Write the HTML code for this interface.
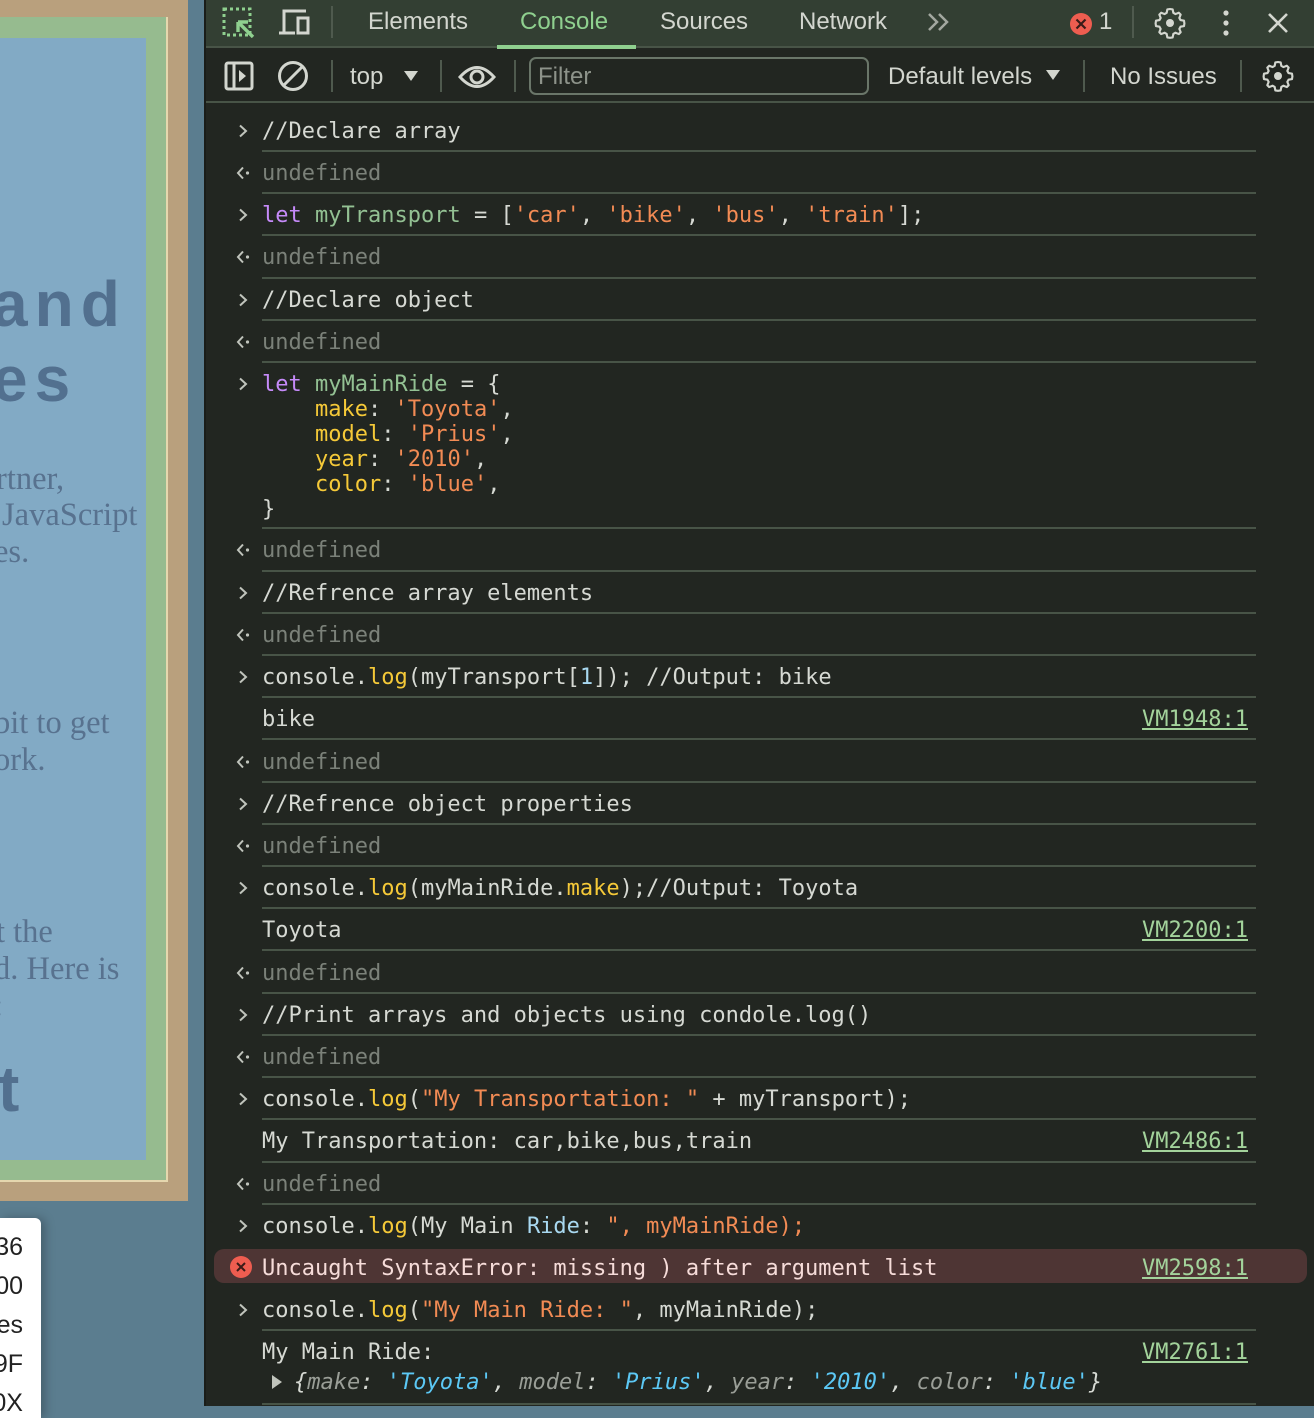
<!DOCTYPE html>
<html><head><meta charset="utf-8">
<style>
*{margin:0;padding:0;box-sizing:border-box}
body{width:1314px;height:1406px;overflow:hidden;background:#5b7d8f;position:relative;font-family:"Liberation Sans",sans-serif}
.abs{position:absolute}
.big{position:absolute;font-family:"Liberation Sans",sans-serif;font-weight:bold;color:#52708f;font-size:64px;letter-spacing:7px;white-space:pre}
.ser{position:absolute;font-family:"Liberation Serif",serif;color:#58728f;font-size:32.5px;white-space:pre;line-height:37px}
#dt{position:absolute;left:204px;top:0;width:1110px;height:1406px;background:#222621;border-left:2px solid #1a1d19}
.t{position:absolute;left:262px;white-space:pre;font-family:"DejaVu Sans Mono","Liberation Mono",monospace;font-size:22px;line-height:25px;color:#d6d9d3;margin-top:1px}
.l{position:absolute;left:262px;width:994px;height:2px;background:#485447}
.p{position:absolute;left:236px;width:14px;height:14px}
.u{color:#7b8179}
.k{color:#c58af9}
.v{color:#93c193}
.s{color:#f28b54}
.y{color:#f5c938}
.n{color:#a8d8f0}
.lnk{position:absolute;right:66px;font-family:"DejaVu Sans Mono",monospace;font-size:22px;line-height:25px;color:#a3d39b;text-decoration:underline;margin-top:1px}
.tab{position:absolute;top:8px;font-size:24px;color:#d3d6cf}
.sep{position:absolute;width:2px;background:#4f5a4e}
</style></head><body>
<div class="abs" style="left:0;top:0;width:188px;height:1201px;background:#b9a07d"></div>
<div class="abs" style="left:0;top:17px;width:168px;height:1165px;background:#e5d7ae"></div>
<div class="abs" style="left:0;top:17px;width:166px;height:1163px;background:#96bb8f"></div>
<div class="abs" style="left:0;top:38px;width:146px;height:1122px;background:#82aac5"></div>
<div class="abs" style="left:0;top:0;width:146px;height:1160px;overflow:hidden">
<div class="big" style="left:-8px;top:267px">and</div>
<div class="big" style="left:-8px;top:342px">es</div>
<div class="ser" style="left:-4px;top:461px">rtner,</div>
<div class="ser" style="left:2px;top:497px">JavaScript</div>
<div class="ser" style="left:-6px;top:534px">es.</div>
<div class="ser" style="left:-6px;top:705px">bit to get</div>
<div class="ser" style="left:-6px;top:742px">ork.</div>
<div class="ser" style="left:-4px;top:914px">t the</div>
<div class="ser" style="left:-6px;top:951px">d. Here is</div>
<div class="ser" style="left:-6px;top:988px">:</div>
<div class="big" style="left:-2px;top:1052px">t</div>
</div>
<div class="abs" style="left:0;top:1218px;width:41px;height:200px;background:#fff;border-radius:0 6px 0 0;box-shadow:4px 0 10px rgba(0,0,0,.25);overflow:hidden">
<div style="position:absolute;right:18px;top:10px;font-size:25px;line-height:39px;color:#222;white-space:pre;text-align:right">36
00
es
9F
0X</div>
</div>

<div id="dt">
<div class="abs" style="left:0;top:0;width:1110px;height:48px;background:#333f33;border-bottom:2px solid #485447"></div>
</div>
<svg class="abs" style="left:222px;top:6px" width="36" height="32" viewBox="0 0 36 32"><rect x="2" y="3" width="26" height="26" fill="none" stroke="#8fd08f" stroke-width="3" stroke-dasharray="3 3"/><path d="M16 16 L31 31 M16 16 L16 26 M16 16 L26 16" stroke="#8fd08f" stroke-width="3.4" fill="none"/></svg>
<svg class="abs" style="left:278px;top:8px" width="34" height="28" viewBox="0 0 34 28"><path d="M6 24 V3 H28 M1 25 H17" stroke="#d3d6cf" stroke-width="3" fill="none"/><rect x="20" y="10" width="10" height="15" fill="none" stroke="#d3d6cf" stroke-width="3"/></svg>
<div class="sep" style="left:331px;top:6px;height:32px"></div>
<div class="tab" style="left:368px">Elements</div>
<div class="tab" style="left:520px;color:#8fd08f">Console</div>
<div class="abs" style="left:497px;top:45px;width:139px;height:4px;background:#8fd08f"></div>
<div class="tab" style="left:660px">Sources</div>
<div class="tab" style="left:799px">Network</div>
<svg class="abs" style="left:926px;top:12px" width="26" height="20" viewBox="0 0 26 20"><path d="M3 2 L11 10 L3 18 M13 2 L21 10 L13 18" stroke="#a3a8a0" stroke-width="2.5" fill="none"/></svg>
<svg class="abs" style="left:1069px;top:12px" width="24" height="24" viewBox="0 0 24 24"><circle cx="12" cy="12" r="11" fill="#ee5d50"/><path d="M7.5 7.5 L16.5 16.5 M16.5 7.5 L7.5 16.5" stroke="#3a1b18" stroke-width="2.2"/></svg>
<div class="tab" style="left:1099px">1</div>
<div class="sep" style="left:1132px;top:6px;height:32px"></div>
<svg class="abs" style="left:1154px;top:7px" width="32" height="32" viewBox="0 0 24 24"><path d="M12 1.5l2 .3.5 2.6 1.6.9 2.5-1 1.4 1.4-1 2.5.9 1.6 2.6.5.3 2-.3 2-2.6.5-.9 1.6 1 2.5-1.4 1.4-2.5-1-1.6.9-.5 2.6-2 .3-2-.3-.5-2.6-1.6-.9-2.5 1-1.4-1.4 1-2.5-.9-1.6-2.6-.5-.3-2 .3-2 2.6-.5.9-1.6-1-2.5 1.4-1.4 2.5 1 1.6-.9.5-2.6z" fill="none" stroke="#d3d6cf" stroke-width="1.6" stroke-linejoin="round"/><circle cx="12" cy="12" r="3" fill="#d3d6cf"/></svg>
<svg class="abs" style="left:1218px;top:8px" width="16" height="30"><circle cx="8" cy="5" r="2.6" fill="#d3d6cf"/><circle cx="8" cy="15" r="2.6" fill="#d3d6cf"/><circle cx="8" cy="25" r="2.6" fill="#d3d6cf"/></svg>
<svg class="abs" style="left:1266px;top:11px" width="24" height="24"><path d="M3 3 L21 21 M21 3 L3 21" stroke="#d3d6cf" stroke-width="2.6"/></svg>
<div class="abs" style="left:206px;top:101px;width:1108px;height:2px;background:#485447"></div>
<svg class="abs" style="left:224px;top:61px" width="30" height="30" viewBox="0 0 30 30"><rect x="2" y="2" width="26" height="26" rx="2" fill="none" stroke="#d3d6cf" stroke-width="3"/><path d="M10 2 V28" stroke="#d3d6cf" stroke-width="3"/><path d="M15 9 L22 15 L15 21Z" fill="#d3d6cf"/></svg>
<svg class="abs" style="left:277px;top:60px" width="32" height="32" viewBox="0 0 32 32"><circle cx="16" cy="16" r="13.5" fill="none" stroke="#d3d6cf" stroke-width="3"/><path d="M7 25 L25 7" stroke="#d3d6cf" stroke-width="3"/></svg>
<div class="sep" style="left:331px;top:60px;height:32px"></div>
<div class="tab" style="left:350px;top:63px">top</div>
<svg class="abs" style="left:403px;top:70px" width="16" height="12"><path d="M1 1 H15 L8 11Z" fill="#d3d6cf"/></svg>
<div class="sep" style="left:440px;top:60px;height:32px"></div>
<svg class="abs" style="left:458px;top:64px" width="38" height="26" viewBox="0 0 38 26"><path d="M2 13 Q19 -6 36 13 Q19 32 2 13Z" fill="none" stroke="#d3d6cf" stroke-width="3"/><circle cx="19" cy="13" r="6" fill="none" stroke="#d3d6cf" stroke-width="3"/></svg>
<div class="sep" style="left:514px;top:60px;height:32px"></div>
<div class="abs" style="left:529px;top:57px;width:340px;height:38px;border:2px solid #6a7669;border-radius:7px"></div>
<div class="tab" style="left:538px;top:63px;color:#8d938a">Filter</div>
<div class="tab" style="left:888px;top:63px">Default levels</div>
<svg class="abs" style="left:1045px;top:69px" width="16" height="12"><path d="M1 1 H15 L8 11Z" fill="#d3d6cf"/></svg>
<div class="sep" style="left:1083px;top:60px;height:32px"></div>
<div class="tab" style="left:1110px;top:63px">No Issues</div>
<div class="sep" style="left:1240px;top:60px;height:32px"></div>
<svg class="abs" style="left:1262px;top:60px" width="32" height="32" viewBox="0 0 24 24"><path d="M12 1.5l2 .3.5 2.6 1.6.9 2.5-1 1.4 1.4-1 2.5.9 1.6 2.6.5.3 2-.3 2-2.6.5-.9 1.6 1 2.5-1.4 1.4-2.5-1-1.6.9-.5 2.6-2 .3-2-.3-.5-2.6-1.6-.9-2.5 1-1.4-1.4 1-2.5-.9-1.6-2.6-.5-.3-2 .3-2 2.6-.5.9-1.6-1-2.5 1.4-1.4 2.5 1 1.6-.9.5-2.6z" fill="none" stroke="#d3d6cf" stroke-width="1.6" stroke-linejoin="round"/><circle cx="12" cy="12" r="3" fill="#d3d6cf"/></svg>

<svg width="0" height="0" style="position:absolute"><defs>
<symbol id="gt" viewBox="0 0 14 14"><path d="M4 1.5 L10 7 L4 12.5" stroke="#c0c4bc" stroke-width="2" fill="none"/></symbol>
<symbol id="lt" viewBox="0 0 14 14"><path d="M7 1.5 L2 7 L7 12.5" stroke="#c0c4bc" stroke-width="2" fill="none"/><circle cx="11.5" cy="7" r="1.6" fill="#c0c4bc"/></symbol>
</defs></svg>

<svg class="p" style="top:124px"><use href="#gt"/></svg><div class="t" style="top:118px">//Declare array</div><div class="l" style="top:150px"></div>
<svg class="p" style="top:166px"><use href="#lt"/></svg><div class="t u" style="top:160px">undefined</div><div class="l" style="top:192px"></div>
<svg class="p" style="top:208px"><use href="#gt"/></svg><div class="t" style="top:202px"><span class="k">let</span> <span class="v">myTransport</span> = [<span class="s">'car'</span>, <span class="s">'bike'</span>, <span class="s">'bus'</span>, <span class="s">'train'</span>];</div><div class="l" style="top:234px"></div>
<svg class="p" style="top:250px"><use href="#lt"/></svg><div class="t u" style="top:244px">undefined</div><div class="l" style="top:277px"></div>
<svg class="p" style="top:293px"><use href="#gt"/></svg><div class="t" style="top:287px">//Declare object</div><div class="l" style="top:319px"></div>
<svg class="p" style="top:335px"><use href="#lt"/></svg><div class="t u" style="top:329px">undefined</div><div class="l" style="top:361px"></div>
<svg class="p" style="top:377px"><use href="#gt"/></svg><div class="t" style="top:371px"><span class="k">let</span> <span class="v">myMainRide</span> = {
    <span class="y">make</span>: <span class="s">'Toyota'</span>,
    <span class="y">model</span>: <span class="s">'Prius'</span>,
    <span class="y">year</span>: <span class="s">'2010'</span>,
    <span class="y">color</span>: <span class="s">'blue'</span>,
}</div><div class="l" style="top:527px"></div>
<svg class="p" style="top:543px"><use href="#lt"/></svg><div class="t u" style="top:537px">undefined</div><div class="l" style="top:570px"></div>
<svg class="p" style="top:586px"><use href="#gt"/></svg><div class="t" style="top:580px">//Refrence array elements</div><div class="l" style="top:612px"></div>
<svg class="p" style="top:628px"><use href="#lt"/></svg><div class="t u" style="top:622px">undefined</div><div class="l" style="top:654px"></div>
<svg class="p" style="top:670px"><use href="#gt"/></svg><div class="t" style="top:664px">console.<span class="y">log</span>(myTransport[<span class="n">1</span>]); //Output: bike</div><div class="l" style="top:696px"></div>
<div class="t" style="top:706px">bike</div><div class="lnk" style="top:706px">VM1948:1</div><div class="l" style="top:738px"></div>
<svg class="p" style="top:755px"><use href="#lt"/></svg><div class="t u" style="top:749px">undefined</div><div class="l" style="top:781px"></div>
<svg class="p" style="top:797px"><use href="#gt"/></svg><div class="t" style="top:791px">//Refrence object properties</div><div class="l" style="top:823px"></div>
<svg class="p" style="top:839px"><use href="#lt"/></svg><div class="t u" style="top:833px">undefined</div><div class="l" style="top:865px"></div>
<svg class="p" style="top:881px"><use href="#gt"/></svg><div class="t" style="top:875px">console.<span class="y">log</span>(myMainRide.<span class="y">make</span>);//Output: Toyota</div><div class="l" style="top:907px"></div>
<div class="t" style="top:917px">Toyota</div><div class="lnk" style="top:917px">VM2200:1</div><div class="l" style="top:949px"></div>
<svg class="p" style="top:966px"><use href="#lt"/></svg><div class="t u" style="top:960px">undefined</div><div class="l" style="top:992px"></div>
<svg class="p" style="top:1008px"><use href="#gt"/></svg><div class="t" style="top:1002px">//Print arrays and objects using condole.log()</div><div class="l" style="top:1034px"></div>
<svg class="p" style="top:1050px"><use href="#lt"/></svg><div class="t u" style="top:1044px">undefined</div><div class="l" style="top:1076px"></div>
<svg class="p" style="top:1092px"><use href="#gt"/></svg><div class="t" style="top:1086px">console.<span class="y">log</span>(<span class="s">"My Transportation: "</span> + myTransport);</div><div class="l" style="top:1118px"></div>
<div class="t" style="top:1128px">My Transportation: car,bike,bus,train</div><div class="lnk" style="top:1128px">VM2486:1</div><div class="l" style="top:1161px"></div>
<svg class="p" style="top:1177px"><use href="#lt"/></svg><div class="t u" style="top:1171px">undefined</div><div class="l" style="top:1203px"></div>
<svg class="p" style="top:1219px"><use href="#gt"/></svg><div class="t" style="top:1213px">console.<span class="y">log</span>(My Main <span class="n">Ride</span>: <span class="s">", myMainRide);</span></div>
<div class="abs" style="left:214px;top:1249px;width:1093px;height:34px;background:#4e3534;border-radius:10px"></div>
<svg class="abs" style="left:230px;top:1256px" width="22" height="22"><circle cx="11" cy="11" r="11" fill="#ee5d50"/><path d="M7 7 L15 15 M15 7 L7 15" stroke="#3a1b18" stroke-width="2"/></svg>
<div class="t" style="top:1255px;color:#f6dcd9">Uncaught SyntaxError: missing ) after argument list</div><div class="lnk" style="top:1255px">VM2598:1</div>
<svg class="p" style="top:1303px"><use href="#gt"/></svg><div class="t" style="top:1297px">console.<span class="y">log</span>(<span class="s">"My Main Ride: "</span>, myMainRide);</div><div class="l" style="top:1329px"></div>
<div class="t" style="top:1339px">My Main Ride:</div><div class="lnk" style="top:1339px">VM2761:1</div>
<svg class="abs" style="left:270px;top:1374px" width="14" height="16"><path d="M2 1 L12 8 L2 15Z" fill="#c0c4bc"/></svg>
<div class="t" style="top:1369px;left:294px;font-style:italic">{<span style="color:#9a9e97">make</span>: <span style="color:#5cc8f5">'Toyota'</span>, <span style="color:#9a9e97">model</span>: <span style="color:#5cc8f5">'Prius'</span>, <span style="color:#9a9e97">year</span>: <span style="color:#5cc8f5">'2010'</span>, <span style="color:#9a9e97">color</span>: <span style="color:#5cc8f5">'blue'</span>}</div>
<div class="l" style="top:1403px"></div>
</body></html>
